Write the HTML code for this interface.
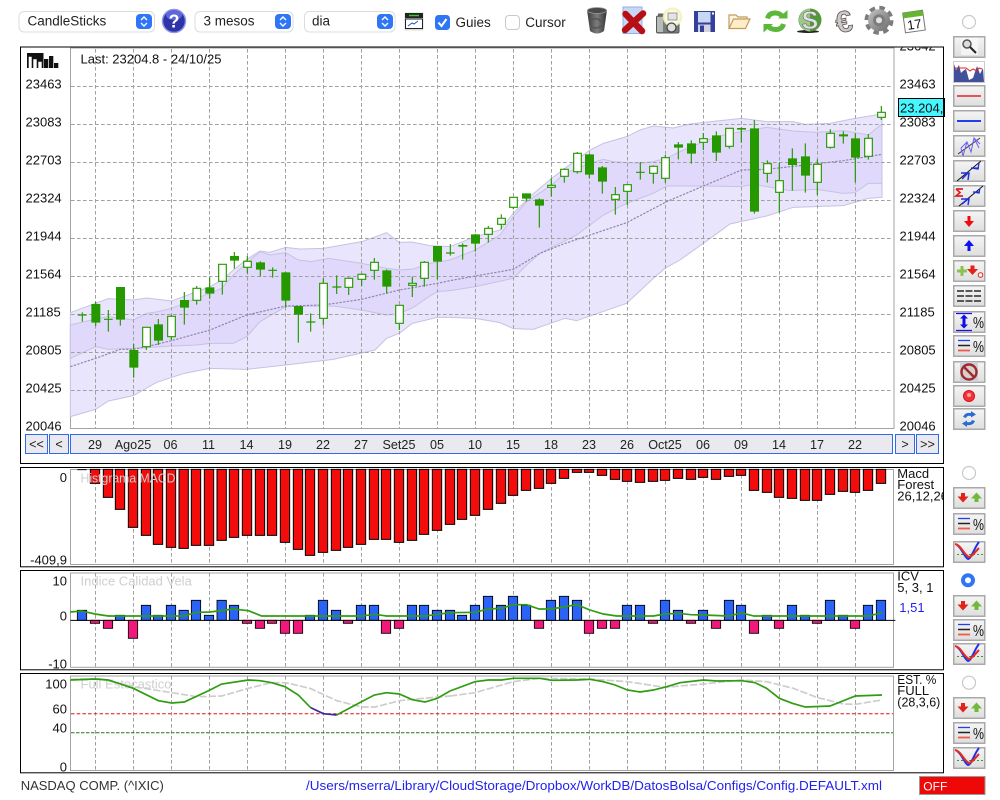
<!DOCTYPE html>
<html><head><meta charset="utf-8"><title>Chart</title>
<style>
html,body{margin:0;padding:0;background:#fff;width:1000px;height:800px;overflow:hidden}
svg{display:block}
text{font-family:"Liberation Sans",sans-serif;font-size:13px;fill:#111}
.n{fill:#222;text-anchor:middle;font-size:12.6px}
.e{text-anchor:end}
.t{font-size:13.5px;fill:#222}
.g{fill:#cfcfcf}
.grid{stroke:#a0a0a0;stroke-width:1;stroke-dasharray:3.6 2.4;fill:none}
.ax{stroke:#a3a3a3;stroke-width:1;fill:#fff}
.fr{stroke:#000;stroke-width:1;fill:none}
.nb{fill:#e9e9ef;stroke:#2f6ae8;stroke-width:1}
</style></head><body>
<svg width="1000" height="800" viewBox="0 0 1000 800" xmlns="http://www.w3.org/2000/svg">
<defs>
<linearGradient id="b" x1="0" y1="0" x2="0" y2="1"><stop offset="0" stop-color="#f5f5f5"/><stop offset="1" stop-color="#dedede"/></linearGradient>
<linearGradient id="tr" x1="0" y1="0" x2="1" y2="0"><stop offset="0" stop-color="#3a3a3a"/><stop offset=".5" stop-color="#7d7d7d"/><stop offset="1" stop-color="#333"/></linearGradient>
<linearGradient id="gr" x1="0" y1="0" x2="1" y2="1"><stop offset="0" stop-color="#c4c4c4"/><stop offset="1" stop-color="#6b6b6b"/></linearGradient>
<radialGradient id="glow"><stop offset=".6" stop-color="#fbfbe8"/><stop offset=".9" stop-color="#f2f0b8"/><stop offset="1" stop-color="#f8f7d8" stop-opacity=".3"/></radialGradient>
<clipPath id="cf"><rect x="21" y="47.6" width="922" height="415"/></clipPath>
<clipPath id="cp"><rect x="894" y="467" width="49" height="300"/></clipPath>
<clipPath id="cy"><rect x="899" y="98" width="44" height="18"/></clipPath>
<path id="v" class="grid" d="M95.5 0V95M133.5 0V95M171.5 0V95M209.5 0V95M247.5 0V95M285.5 0V95M323.5 0V95M361.5 0V95M399.5 0V95M437.5 0V95M475.5 0V95M513.5 0V95M551.5 0V95M589.5 0V95M627.5 0V95M665.5 0V95M703.5 0V95M741.5 0V95M779.5 0V95M817.5 0V95M855.5 0V95"/>
<rect id="bt" x=".75" y=".75" width="31" height="20.5" fill="url(#b)" stroke="#a9a9a9" stroke-width="1.5"/>
<g id="ud"><use href="#bt"/><path d="M4.5 9.5h3.500V6h4v3.500h3.500l-5.500 6z" fill="#e2231a"/><path d="M18 11.500l5.500-6 5.500 6h-3.500v3.500h-4v-3.500z" fill="#72b83c"/></g>
<g id="pc"><use href="#bt"/><path d="M5 5.500h12" stroke="#2040f0" stroke-width="1.300"/><path d="M5 10.500h12" stroke="#222" stroke-width="1.500"/><path d="M5 15.500h12" stroke="#ef5a4a" stroke-width="1.800"/><text x="20" y="17" textLength="11" lengthAdjust="spacingAndGlyphs" style="font-size:16px">%</text></g>
<g id="vv"><use href="#bt"/><path d="M4 13.500H30" stroke="#3a9a20" stroke-width="1" stroke-dasharray="2 2"/><path d="M4 4C9 7 11 16 15 18C19 17 21 7 26 1" fill="none" stroke="#2030e8" stroke-width="2"/><path d="M2 3C8 4 11 14 16 16C20 15 22 11 26 7" fill="none" stroke="#e82a20" stroke-width="2"/></g>
</defs>

<!-- toolbar selects -->
<rect x="19" y="11.500" width="135.500" height="20.500" rx="5" fill="#fff" stroke="#dcdcdc"/>
<rect x="136" y="14" width="16" height="15" rx="4" fill="#2f76f6"/>
<path d="M141 20l3-3 3 3M141 23l3 3 3-3" fill="none" stroke="#fff" stroke-width="1.400"/>
<text x="27.500" y="25.500" class="t">CandleSticks</text>
<circle cx="174" cy="21" r="11.500" fill="#2e33a8" stroke="#8d95e8" stroke-width="1.500"/>
<ellipse cx="174" cy="15" rx="8" ry="5" fill="#5f66d8"/>
<text x="174" y="27.500" text-anchor="middle" style="font-size:18px;font-weight:bold;fill:#fff">?</text>
<rect x="195" y="11.500" width="98" height="20.500" rx="5" fill="#fff" stroke="#dcdcdc"/>
<rect x="275" y="14" width="16" height="15" rx="4" fill="#2f76f6"/>
<path d="M280 20l3-3 3 3M280 23l3 3 3-3" fill="none" stroke="#fff" stroke-width="1.400"/>
<text x="203.500" y="25.500" class="t">3 mesos</text>
<rect x="304.500" y="11.500" width="90.500" height="20.500" rx="5" fill="#fff" stroke="#dcdcdc"/>
<rect x="377" y="14" width="16" height="15" rx="4" fill="#2f76f6"/>
<path d="M382 20l3-3 3 3M382 23l3 3 3-3" fill="none" stroke="#fff" stroke-width="1.400"/>
<text x="312" y="25.500" class="t">dia</text>
<!-- small chart icon -->
<rect x="404.500" y="12.500" width="19" height="18" fill="#ddd"/>
<rect x="405" y="13" width="18" height="5" fill="#222"/><path d="M409 15.500h10" stroke="#3c3" stroke-width="1.500"/>
<rect x="405.500" y="19" width="17" height="9.500" fill="#fff" stroke="#222"/>
<path d="M408 26l4-3 2 1 4-3" fill="none" stroke="#2a50d0"/>
<!-- checkboxes -->
<rect x="435" y="15" width="15" height="15" rx="3.500" fill="#2f76f6"/>
<path d="M438.500 22.500l3 3.500 5-7" fill="none" stroke="#fff" stroke-width="2"/>
<text x="455.500" y="27" class="t">Guies</text>
<rect x="505.500" y="15.500" width="14" height="14" rx="3.500" fill="#fff" stroke="#c9c9c9"/>
<text x="525.300" y="27" class="t">Cursor</text>
<!-- trash -->
<path d="M587 10Q597 6 607 10L604 31Q597 36 590 31Z" fill="url(#tr)"/><ellipse cx="597" cy="10.500" rx="9.500" ry="3" fill="#4a4a4a" stroke="#999" stroke-width=".7"/>
<path d="M591 20Q598 16 603 24Q598 30 592 27" fill="none" stroke="#555" stroke-width="1.500"/>
<!-- X icon -->
<rect x="623" y="7" width="19" height="26.500" fill="#c6d8f6" stroke="#8fb0e8"/>
<path d="M625.500 14L642 31M643 13.500L625 30" stroke="#b80f14" stroke-width="6.500" stroke-linecap="round"/>
<!-- camera -->
<rect x="656.500" y="16" width="22.500" height="17" rx="1.500" fill="#777f7c" stroke="#555"/>
<rect x="658" y="13.500" width="7" height="3" fill="#666"/>
<rect x="657" y="17" width="6" height="15" fill="#b8bcb9"/>
<circle cx="672.500" cy="17" r="10" fill="url(#glow)"/>
<rect x="668" y="13" width="9" height="7" fill="#e4e4e4" stroke="#777" stroke-width=".7"/>
<circle cx="671.500" cy="27.500" r="4.500" fill="#dfe2df" stroke="#444" stroke-width="1.200"/>
<!-- floppy -->
<rect x="694" y="11" width="21" height="21" fill="#34409c"/>
<rect x="698" y="12" width="12.500" height="10.500" fill="#c7d8f4"/><rect x="712" y="12.500" width="2" height="2" fill="#fff"/>
<rect x="698" y="24.500" width="12.500" height="7.500" fill="#d4d4de"/><rect x="700" y="25.500" width="4" height="6.500" fill="#34409c"/>
<!-- folder -->
<path d="M729 28.500V15h7l2 2h9v4" fill="#fdf6e6" stroke="#c49a5e" stroke-width="1.200"/>
<path d="M729 28.500l4.500-9.500H750l-4.500 9.500z" fill="#fdeec8" stroke="#c49a5e" stroke-width="1.200"/>
<!-- refresh -->
<path d="M767.500 18.500Q769 13 775 13Q779.500 13 782 16" fill="none" stroke="#5cb83a" stroke-width="5"/>
<path d="M778 18.500H787.500V10Z" fill="#5cb83a"/>
<path d="M783.500 24Q782 29.500 776 29.500Q771 29.500 768.500 26.500" fill="none" stroke="#5cb83a" stroke-width="5"/>
<path d="M773 24H763.500V32.500Z" fill="#5cb83a"/>
<!-- S coin -->
<ellipse cx="808" cy="31.500" rx="11" ry="1.500" fill="#222"/>
<circle cx="810" cy="20" r="11.500" fill="#4f9a34"/>
<path d="M799 20a11.500 11.500 0 0 1 11-11.500V31.500a11.500 11.500 0 0 1-11-11.500Z" fill="#9cc88a"/>
<text x="810" y="29" text-anchor="middle" style="font-size:25px;font-weight:bold;fill:#e4e4e4;stroke:#777;stroke-width:.7">S</text>
<!-- euro -->
<text x="844" y="32" text-anchor="middle" transform="rotate(-12 844 22)" style="font-size:30px;font-weight:bold;fill:#cfcaca;stroke:#5a5050;stroke-width:.8">€</text>
<!-- gear -->
<circle cx="879" cy="20.300" r="12" fill="none" stroke="#7c7c7c" stroke-width="5" stroke-dasharray="5.200 4.225"/>
<circle cx="879" cy="20.300" r="11" fill="url(#gr)"/>
<circle cx="879" cy="20.300" r="6" fill="#7d7d7d"/>
<circle cx="879" cy="20.300" r="3" fill="#e4e4e4"/>
<!-- calendar -->
<g transform="rotate(-8 914 21.500)"><rect x="904" y="11.500" width="20" height="20" fill="#fff" stroke="#777"/><rect x="904" y="11.500" width="20" height="5.500" fill="#66b52e"/><text x="914" y="29" text-anchor="middle" style="font-size:13px">17</text></g>
<circle cx="969" cy="22" r="6.500" fill="#fff" stroke="#c9c9c9" stroke-width="1.200"/>

<!-- MAIN PANEL -->
<rect x="70.500" y="48" width="823.500" height="380.500" class="ax"/>
<g transform="translate(0,220) scale(.33333)" stroke="none">
<path fill="#e9e5fd" stroke="#c6c2e2" stroke-width="3" d="M211 278L325 236 400 240 440 234 515 243 590 215 630 200 665 180 700 150 745 115 780 93 810 97 857 82 900 87 970 85 1085 65 1160 38 1197 67 1235 66 1290 77 1350 80 1425 50 1500 30 1540 -20 1590 -70 1655 -125 1695 -155 1770 -210 1810 -230 1880 -250 1920 -270 1960 -282 2020 -276 2070 -288 2150 -297 2225 -305 2300 -295 2380 -295 2415 -287 2490 -290 2565 -305 2646 -318V-68L2605 -65 2530 -43 2380 -38 2300 -12 2190 12 2110 70 2040 120 1995 145 1960 175 1880 250 1730 302 1695 295 1600 328 1540 326 1500 308 1426 295 1350 292 1312 292 1237 310 1198 340 1160 355 1125 390 1000 418 857 435 740 448 630 445 553 460 470 487 400 527 325 543 287 568 211 590Z"/>
<path fill="#e1d9fb" stroke="#c6c2e2" stroke-width="3" d="M211 315L287 297 325 290 400 300 440 280 475 275 515 265 553 250 590 235 630 220 665 205 700 165 745 125 780 95 810 105 857 98 895 120 935 125 985 115 1085 130 1160 145 1200 150 1240 147 1290 130 1350 120 1426 90 1500 45 1540 -10 1580 -55 1655 -105 1695 -140 1770 -170 1810 -182 1840 -175 1920 -170 1960 -175 2000 -185 2050 -210 2150 -250 2225 -265 2300 -278 2380 -267 2450 -263 2530 -268 2605 -255 2646 -288V-110H2605L2565 -82 2530 -80 2450 -92 2370 -88 2300 -100 2260 -107 2225 -100 2110 -102 2000 -102 1960 -80 1880 -50 1810 -15 1730 45 1620 100 1580 135 1540 175 1426 200 1350 212 1312 215 1290 228 1240 262 1200 280 1160 285 1085 270 1000 258 857 260 780 305 740 350 700 370 630 370 590 375 515 378 440 383 400 385 325 388 287 380 211 415Z"/>
</g>
<path class="grid" d="M71 86.500H893M71 124.500H893M71 162.500H893M71 200.500H893M71 238.500H893M71 276.500H893M71 314.500H893M71 352.500H893M71 390.500H893"/>
<path class="grid" d="M95.500 49V428M133.500 49V428M171.500 49V428M209.500 49V428M247.500 49V428M285.500 49V428M323.500 49V428M361.500 49V428M399.500 49V428M437.500 49V428M475.500 49V428M513.500 49V428M551.500 49V428M589.500 49V428M627.500 49V428M665.500 49V428M703.500 49V428M741.500 49V428M779.500 49V428M817.500 49V428M855.500 49V428"/>
<g transform="translate(0,220) scale(.33333)">
<path fill="none" stroke="#8d86a8" stroke-width="3.500" stroke-dasharray="7 4" d="M211 440L287 415 361 388 400 388 440 380 515 362 630 330 740 285 857 258 970 255 1085 238 1198 210 1312 190 1350 182 1426 168 1540 148 1620 100 1690 72 1770 45 1880 8 2000 -55 2110 -102 2225 -150 2300 -152 2416 -165 2530 -178 2646 -197"/>
<path fill="none" stroke="#269900" stroke-width="3.500" d="M247 277V305M234 285H260M287 245V318M325 270V335M312 298H338M361 201V317M401 372V473M439 322V390M475 297V375M514 285V360M553 216V314M590 198V254M629 172V236M667 133V224M703 96V146M742 108V160M781 124V170M818 142V173M805 151H831M857 156V262M895 258V368M932 280V335M970 175V315M1010 166V222M1046 172V225M1085 160V198M1123 114V179M1160 148V221M1198 256V330M1237 170V231M1273 123V200M1312 78V178"/>
<path fill="#269900" d="M274 252h27V308h-27zM348 201h27V299h-27zM388 390h27V443h-27zM462 313h27V362h-27zM540 240h27V263h-27zM616 202h27V221h-27zM690 108h27V122h-27zM768 127h27V149h-27zM844 157h27V242h-27zM882 258h27V284h-27zM919 304h27V308h-27zM997 199h27V203h-27zM1147 151h27V200h-27zM1299 78h27V125h-27z"/>
<path fill="#fff" stroke="#269900" stroke-width="3.500" d="M428 322h23V380h-23zM503 289h23V350h-23zM579 205h23V241h-23zM656 133h23V184h-23zM731 124h23V142h-23zM959 190h23V295h-23zM1035 175h23V202h-23zM1074 163h23V178h-23zM1112 127h23V151h-23zM1187 256h23V310h-23zM1226 190h23V196h-23zM1262 127h23V175h-23z"/>
</g>
<g transform="translate(450,90) scale(.33333)">
<path fill="none" stroke="#269900" stroke-width="3.500" d="M1 462V497M-12 489H14M38 460V509M76 432V485M115 408V458M154 373V418M190 322V358M229 310V335M268 325V413M304 265V320M343 235V278M382 186V251M418 192V265M457 228V311M496 291V374M532 283V345M571 216V269M558 247H584M610 226V281M646 195V278M685 156V208M724 151V221M760 129V180M799 124V213M838 115V176M874 112V158M913 90V371M952 211V278M988 218V368M1027 175V302M1066 160V308M1102 208V315M1141 118V176M1180 124V161M1216 130V277M1255 132V209M1294 48V90"/>
<path fill="#269900" d="M25 465h27V470h-27zM63 433h27V461h-27zM216 310h27V326h-27zM255 328h27V347h-27zM405 193h27V254h-27zM444 232h27V275h-27zM672 163h27V173h-27zM711 160h27V191h-27zM786 136h27V188h-27zM861 114h27V119h-27zM900 115h27V365h-27zM1014 205h27V225h-27zM1053 199h27V257h-27zM1167 133h27V139h-27zM1203 145h27V203h-27z"/>
<path fill="#fff" stroke="#269900" stroke-width="3.500" d="M104 415h23V433h-23zM143 385h23V403h-23zM179 322h23V352h-23zM293 286h23V292h-23zM332 238h23V259h-23zM371 190h23V245h-23zM485 314h23V328h-23zM521 284h23V304h-23zM599 229h23V250h-23zM635 203h23V265h-23zM749 146h23V157h-23zM827 115h23V169h-23zM941 221h23V250h-23zM977 272h23V307h-23zM1091 223h23V277h-23zM1130 130h23V172h-23zM1244 145h23V199h-23zM1283 67h23V82h-23z"/>
</g>
<path d="M27 53h16.500v15H27z" fill="#111"/><path d="M28.700 56.700h3V68h-3zM33.300 59.300h3.400V68h-3.400zM38.300 61.700h3.400V68h-3.400z" fill="#fff"/><path d="M44 59h4.300v9H44zM49 56h4.300v12H49zM54 63h4.300v5H54z" fill="#111"/>
<text x="80.500" y="63.500">Last: 23204.8 - 24/10/25</text>
<g>
<text x="25.500" y="88.500">23463</text><text x="25.500" y="126.500">23083</text><text x="25.500" y="164.500">22703</text><text x="25.500" y="202.500">22324</text><text x="25.500" y="240.500">21944</text><text x="25.500" y="278.500">21564</text><text x="25.500" y="316.500">21185</text><text x="25.500" y="354.500">20805</text><text x="25.500" y="392.500">20425</text><text x="25.500" y="430.500">20046</text>
</g>
<g clip-path="url(#cf)">
<text x="899.500" y="50.500">23642</text><text x="899.500" y="88.500">23463</text><text x="899.500" y="126.500">23083</text><text x="899.500" y="164.500">22703</text><text x="899.500" y="202.500">22324</text><text x="899.500" y="240.500">21944</text><text x="899.500" y="278.500">21564</text><text x="899.500" y="316.500">21185</text><text x="899.500" y="354.500">20805</text><text x="899.500" y="392.500">20425</text><text x="899.500" y="430.500">20046</text>
</g>
<rect x="898.500" y="98.500" width="46" height="18" fill="#45f6ff" stroke="#000"/>
<g clip-path="url(#cy)"><text x="900" y="112.500">23.204,8</text></g>
<!-- nav -->
<rect x="25.500" y="434.500" width="22" height="19" class="nb"/><text x="36.500" y="448.500" class="n">&lt;&lt;</text>
<rect x="49.500" y="434.500" width="19" height="19" class="nb"/><text x="59" y="448.500" class="n">&lt;</text>
<rect x="70.500" y="434.500" width="822" height="19" class="nb"/>
<rect x="895.500" y="434.500" width="19" height="19" class="nb"/><text x="905" y="448.500" class="n">&gt;</text>
<rect x="916.500" y="434.500" width="22" height="19" class="nb"/><text x="927.500" y="448.500" class="n">&gt;&gt;</text>
<text x="95" y="449" class="n">29</text><text x="133" y="449" class="n">Ago25</text><text x="170.500" y="449" class="n">06</text><text x="208.500" y="449" class="n">11</text><text x="246.500" y="449" class="n">14</text><text x="285" y="449" class="n">19</text><text x="323" y="449" class="n">22</text><text x="361" y="449" class="n">27</text><text x="399" y="449" class="n">Set25</text><text x="437" y="449" class="n">05</text><text x="475" y="449" class="n">10</text><text x="513" y="449" class="n">15</text><text x="551" y="449" class="n">18</text><text x="589" y="449" class="n">23</text><text x="627" y="449" class="n">26</text><text x="665" y="449" class="n">Oct25</text><text x="703" y="449" class="n">06</text><text x="741" y="449" class="n">09</text><text x="779" y="449" class="n">14</text><text x="817" y="449" class="n">17</text><text x="855" y="449" class="n">22</text>
<rect x="20.500" y="47" width="923" height="416.500" class="fr"/>

<!-- MACD -->
<rect x="70.500" y="469.500" width="823" height="95" class="ax"/>
<use href="#v" y="469"/>
<g transform="translate(0,460) scale(.33333)">
<path fill="#f20c0c" stroke="#000" stroke-width="3" d="M271 28h28V70h-28zM310 28h28V112h-28zM346 28h28V148h-28zM385 28h28V202h-28zM424 28h28V226h-28zM460 28h28V253h-28zM499 28h28V262h-28zM537 28h28V265h-28zM574 28h28V256h-28zM613 28h28V256h-28zM651 28h28V241h-28zM688 28h28V232h-28zM727 28h28V226h-28zM766 28h28V226h-28zM802 28h28V226h-28zM841 28h28V247h-28zM880 28h28V268h-28zM916 28h28V286h-28zM955 28h28V277h-28zM994 28h28V271h-28zM1030 28h28V262h-28zM1069 28h28V253h-28zM1108 28h28V238h-28zM1144 28h28V238h-28zM1183 28h28V247h-28zM1222 28h28V241h-28zM1258 28h28V223h-28zM1297 28h28V211h-28zM1336 28h28V193h-28z"/>
<path d="M232 29h28" stroke="#000" stroke-width="3"/>
</g>
<g transform="translate(450,460) scale(.33333)">
<path fill="#f20c0c" stroke="#000" stroke-width="3" d="M22 28h28V178h-28zM61 28h28V166h-28zM100 28h28V148h-28zM139 28h28V130h-28zM175 28h28V106h-28zM214 28h28V91h-28zM253 28h28V85h-28zM289 28h28V70h-28zM328 28h28V55h-28zM367 28h28V37h-28zM403 28h28V37h-28zM442 28h28V46h-28zM481 28h28V58h-28zM517 28h28V64h-28zM556 28h28V67h-28zM595 28h28V64h-28zM631 28h28V61h-28zM670 28h28V55h-28zM709 28h28V58h-28zM745 28h28V52h-28zM784 28h28V58h-28zM823 28h28V49h-28zM859 28h28V46h-28zM898 28h28V91h-28zM937 28h28V97h-28zM973 28h28V112h-28zM1012 28h28V115h-28zM1051 28h28V121h-28zM1087 28h28V121h-28zM1126 28h28V103h-28zM1165 28h28V94h-28zM1201 28h28V97h-28zM1240 28h28V91h-28zM1279 28h28V70h-28z"/>
</g>
<text x="80.500" y="482.300" class="g" textLength="95" lengthAdjust="spacingAndGlyphs">Histgrama MACD</text>
<text x="67" y="482" class="e">0</text><text x="67" y="564.500" class="e">-409,9</text>
<g clip-path="url(#cp)"><text x="897.300" y="478">Macd</text><text x="897.300" y="489">Forest</text><text x="897.300" y="500.300">26,12,26</text></g>
<rect x="20.500" y="467.500" width="923" height="99.300" class="fr"/>

<!-- ICV -->
<rect x="70.500" y="573" width="823" height="94.300" class="ax"/>
<use href="#v" y="573"/>
<text x="80.500" y="585.300" class="g">Indice Calidad Vela</text>
<g transform="translate(0,460) scale(.33333)">
<path fill="#2a63f5" stroke="#000" stroke-width="2.500" d="M232 451h28V481h-28zM346 466h28V481h-28zM424 436h28V481h-28zM460 466h28V481h-28zM499 436h28V481h-28zM537 451h28V481h-28zM574 421h28V481h-28zM613 466h28V481h-28zM651 421h28V481h-28zM688 436h28V481h-28zM916 466h28V481h-28zM955 421h28V481h-28zM994 451h28V481h-28zM1069 436h28V481h-28zM1108 436h28V481h-28zM1222 436h28V481h-28zM1258 436h28V481h-28zM1297 451h28V481h-28zM1336 451h28V481h-28z"/>
<path fill="#f0187a" stroke="#000" stroke-width="2.500" d="M271 481h28V490h-28zM310 481h28V505h-28zM385 481h28V535h-28zM727 481h28V490h-28zM766 481h28V505h-28zM802 481h28V490h-28zM841 481h28V520h-28zM880 481h28V520h-28zM1030 481h28V490h-28zM1144 481h28V520h-28zM1183 481h28V505h-28z"/>
<path d="M211 481H1350" stroke="#000" stroke-width="3"/>
<path fill="none" stroke="#2f9c12" stroke-width="5" d="M211 456L245 453 285 462 325 468H550L590 457 630 456 700 447 745 452 785 468H1085L1125 463 1160 468H1275L1350 458"/>
</g>
<g transform="translate(450,460) scale(.33333)">
<path fill="#2a63f5" stroke="#000" stroke-width="2.500" d="M22 466h28V481h-28zM61 436h28V481h-28zM100 409h28V481h-28zM139 436h28V481h-28zM175 409h28V481h-28zM214 436h28V481h-28zM289 421h28V481h-28zM328 409h28V481h-28zM367 421h28V481h-28zM517 436h28V481h-28zM556 436h28V481h-28zM631 421h28V481h-28zM670 451h28V481h-28zM745 451h28V481h-28zM823 421h28V481h-28zM859 436h28V481h-28zM937 466h28V481h-28zM1012 436h28V481h-28zM1051 466h28V481h-28zM1126 421h28V481h-28zM1165 466h28V481h-28zM1240 436h28V481h-28zM1279 421h28V481h-28z"/>
<path fill="#f0187a" stroke="#000" stroke-width="2.500" d="M253 481h28V505h-28zM403 481h28V520h-28zM442 481h28V505h-28zM481 481h28V505h-28zM595 481h28V490h-28zM709 481h28V490h-28zM784 481h28V505h-28zM898 481h28V520h-28zM973 481h28V505h-28zM1087 481h28V490h-28zM1201 481h28V505h-28z"/>
<path d="M0 481H1336" stroke="#000" stroke-width="3"/>
<path fill="none" stroke="#2f9c12" stroke-width="5" d="M0 458L75 457 115 447 155 445 190 434 230 434 267 447 305 447 380 434 420 450 460 462 500 468H610L645 462 685 460 723 464 760 465 835 468 875 459 912 468H1255L1296 458"/>
</g>
<text x="67" y="585.300" class="e">10</text><text x="67" y="620.300" class="e">0</text><text x="67" y="668.300" class="e">-10</text>
<text x="897.300" y="580.500">ICV</text><text x="897.300" y="592">5, 3, 1</text><text x="899.300" y="612" style="fill:#2222ee">1,51</text>
<rect x="20.500" y="570.500" width="923" height="99.300" class="fr"/>

<!-- STOCH -->
<rect x="70.500" y="676" width="823" height="94.500" class="ax"/>
<use href="#v" y="676"/>
<text x="80.500" y="688.500" class="g">Full Estocastico</text>
<path d="M71 713.700H893" stroke="#e01010" stroke-width="1" stroke-dasharray="3.500 2.200"/>
<path d="M71 732.700H893" stroke="#1a7a10" stroke-width="1" stroke-dasharray="3.500 1.500"/>
<g transform="translate(0,460) scale(.33333)">
<path fill="none" stroke="#cdcdcd" stroke-width="5" stroke-dasharray="22 6" d="M211 658L300 657 400 680 515 698 590 710 665 708 745 685 815 668 857 668 930 685 1010 722 1085 741 1125 741 1200 722 1237 718 1350 708"/>
<path fill="none" stroke="#2f9c12" stroke-width="5" d="M211 660L285 657 325 660 400 685 475 722 515 729 553 726 630 690 665 672 745 660 780 662 815 668 855 680 895 705 932 743"/>
<path fill="none" stroke="#3a2a9a" stroke-width="5" d="M932 743L970 761 1010 765"/>
<path fill="none" stroke="#2f9c12" stroke-width="5" d="M1010 765L1085 725 1123 705 1160 698 1198 702 1237 719 1275 726 1312 715 1350 693"/>
</g>
<g transform="translate(450,460) scale(.33333)">
<path fill="none" stroke="#cdcdcd" stroke-width="5" stroke-dasharray="22 6" d="M0 708L75 698 190 665 270 655 418 657 532 665 645 682 760 672 875 660 950 665 1030 685 1100 712 1180 732 1216 733 1296 720"/>
<path fill="none" stroke="#2f9c12" stroke-width="5" d="M0 693L75 665 115 660 155 660 190 655 270 655 305 661 380 660 420 658 460 665 495 675 532 690 570 696 610 690 650 680 690 668 760 660 800 663 875 662 915 668 950 685 988 715 1027 730 1066 741 1140 738 1216 708 1296 705"/>
</g>
<text x="67" y="688.300" class="e">100</text><text x="67" y="713.300" class="e">60</text><text x="67" y="732.300" class="e">40</text><text x="67" y="771.300" class="e">0</text>
<text x="897.300" y="684" textLength="39" lengthAdjust="spacingAndGlyphs">EST. %</text><text x="897.300" y="695">FULL</text><text x="897.300" y="706.500" textLength="43" lengthAdjust="spacingAndGlyphs">(28,3,6)</text>
<rect x="20.500" y="673.500" width="923" height="99.300" class="fr"/>

<!-- status -->
<text x="20.700" y="790" style="fill:#333">NASDAQ COMP. (^IXIC)</text>
<text x="306" y="790" textLength="576" lengthAdjust="spacingAndGlyphs" style="fill:#2222ee">/Users/mserra/Library/CloudStorage/Dropbox/WorkDB/DatosBolsa/Configs/Config.DEFAULT.xml</text>
<rect x="919.500" y="776.500" width="65.500" height="18" fill="#ee0808" stroke="#9a9a9a"/>
<text x="923.300" y="790.500" style="fill:#fff;font-size:12px">OFF</text>

<!-- right column -->
<g transform="translate(953,36)"><use href="#bt"/><rect x="8" y="2" width="17" height="17" fill="#fafafa" opacity=".7"/><circle cx="14" cy="8" r="4" fill="#ddd" stroke="#555" stroke-width="1.500"/><path d="M17 11l6 6" stroke="#222" stroke-width="2"/></g>
<g transform="translate(953,61)"><rect x=".5" y=".5" width="31" height="21" fill="#fff" stroke="#ccc"/><path d="M1 21V3L3 9 6 4 8 12 10 10 13 8 16 19 20 17 24 5 27 13 30 7 31 21Z" fill="#42509c"/><path d="M2 7H13L17 10 20 8 24 10 26 7 29 8" fill="none" stroke="#e82020"/></g>
<g transform="translate(953,85)"><use href="#bt"/><path d="M4 11h24" stroke="#e8505a" stroke-width="2"/></g>
<g transform="translate(953,110)"><use href="#bt"/><path d="M4 11h24" stroke="#2040f0" stroke-width="2"/></g>
<g transform="translate(953,135)"><use href="#bt"/><path d="M5 19L27 3" stroke="#333"/><path d="M10 21L14 7 18 17 21 3 26 13M10 21L8 13 14 7M18 17L21 3 27 9" fill="none" stroke="#6a60f0" stroke-width="1"/></g>
<g transform="translate(953,160)"><use href="#bt"/><path d="M4 21L28 1" stroke="#111"/><path d="M8 13h8l-1 7M15 13L9 19" fill="none" stroke="#2030e0" stroke-width="1.500"/><path d="M18 8h8M26 3l-1 6-7-1" fill="none" stroke="#2030e0" stroke-width="1.300"/></g>
<g transform="translate(953,185)"><use href="#bt"/><path d="M6 21L30 1" stroke="#111"/><path d="M3 4h7M3 4l4 3.500-4 3.500h7" fill="none" stroke="#e02020" stroke-width="1.700"/><path d="M8 14h8l-1 6M15 14L9 19" fill="none" stroke="#2030e0" stroke-width="1.500"/><path d="M20 7h7M27 3l-1 5-6-1" fill="none" stroke="#2030e0" stroke-width="1.300"/></g>
<g transform="translate(953,210)"><use href="#bt"/><path d="M11 11h3.500V6h3v5H21l-5 6z" fill="#f00c0c"/></g>
<g transform="translate(953,235)"><use href="#bt"/><path d="M11 11l5-6 5 6h-3.500v5h-3v-5z" fill="#1010f0"/></g>
<g transform="translate(953,260)"><use href="#bt"/><path d="M4 9.500h3.500V6h3v3.500H14v3h-3.500V16h-3v-3.500H4z" fill="#8cc050"/><path d="M14 9h3.500V5.500h4V9H25l-5.500 6z" fill="#e2231a"/><circle cx="27.500" cy="15" r="2.300" fill="#fff" stroke="#e2231a"/></g>
<g transform="translate(953,285)"><use href="#bt"/><path d="M4 6h7M12.500 6h7M21 6h7M4 11h7M12.500 11h7M21 11h7M4 16h7M12.500 16h7M21 16h7" stroke="#444" stroke-width="1.800"/></g>
<g transform="translate(953,311)"><use href="#bt"/><path d="M3 2.500h16M3 19.500h16" stroke="#1010e0" stroke-width="1.200"/><path d="M7 7.500l4-4 4 4h-2.500v6H15l-4 4-4-4h2.500v-6z" fill="#1010e0"/><text x="20" y="17" textLength="11" lengthAdjust="spacingAndGlyphs" style="font-size:16px">%</text></g>
<g transform="translate(953,335)"><use href="#pc"/></g>
<g transform="translate(953,361)"><use href="#bt"/><rect x="7" y="1" width="18" height="20" fill="#cdd0dc"/><circle cx="16" cy="11" r="7.500" fill="#d6cfcf" stroke="#a02a2a" stroke-width="2.400"/><path d="M11 6l10 10" stroke="#a02a2a" stroke-width="2.400"/></g>
<g transform="translate(953,385)"><use href="#bt"/><circle cx="16" cy="11" r="5.500" fill="#f0353a" stroke="#e01018"/><circle cx="16" cy="10" r="2" fill="#f9a0a4"/></g>
<g transform="translate(953,408)"><use href="#bt"/><path d="M10 9Q12 4 18 5V3l5 3.500-5 3V8Q14 7 13 10Z" fill="#2a6cd0"/><path d="M22 13Q20 18 14 17V19L9 15.500 14 12.500V14Q18 15 19 12Z" fill="#2a6cd0"/></g>

<circle cx="969" cy="473" r="6.500" fill="#fff" stroke="#c9c9c9" stroke-width="1.200"/>
<use href="#ud" x="953" y="487"/><use href="#pc" x="953" y="513"/><use href="#vv" x="953" y="541"/>
<circle cx="968" cy="580.300" r="5" fill="#fff" stroke="#2f76f6" stroke-width="4"/>
<use href="#ud" x="953" y="595"/><use href="#pc" x="953" y="619"/><use href="#vv" x="953" y="643"/>
<circle cx="969" cy="682.700" r="6.500" fill="#fff" stroke="#c9c9c9" stroke-width="1.200"/>
<use href="#ud" x="953" y="697"/><use href="#pc" x="953" y="722"/><use href="#vv" x="953" y="747"/>
</svg>
</body></html>
